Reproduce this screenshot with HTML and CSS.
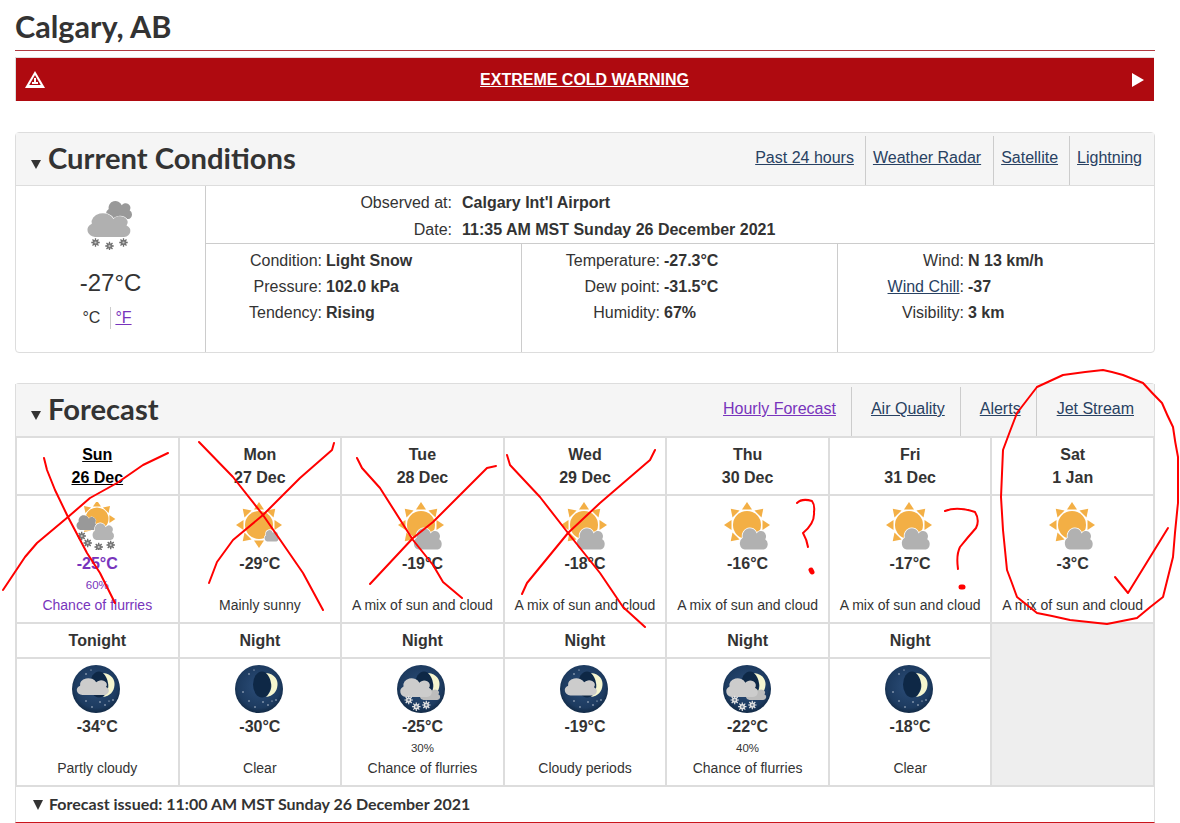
FILE: index.html
```html
<!DOCTYPE html>
<html lang="en">
<head>
<meta charset="utf-8">
<title>Calgary, AB</title>
<link rel="stylesheet" href="styles.css">
</head>
<body>
<svg class="sprite" aria-hidden="true">
  <defs>
    <radialGradient id="night-sky" cx="50%" cy="45%" r="55%">
      <stop offset="0" stop-color="#2b4d78"/>
      <stop offset="0.8" stop-color="#1d3b60"/>
      <stop offset="1" stop-color="#122a46"/>
    </radialGradient>
    <path id="cloud-shape" d="M6 20A6 6 0 0 1 4 9 7.3 7.3 0 0 1 18 5 5 5 0 0 1 26.5 10.5 5.2 5.2 0 0 1 25 20Z"/>
    <g id="rays">
      <path id="ray" d="M24 0l5 7.5h-10z" fill="#f3af45"/>
      <use href="#ray" transform="rotate(45 24 23)"/>
      <use href="#ray" transform="rotate(90 24 23)"/>
      <use href="#ray" transform="rotate(135 24 23)"/>
      <use href="#ray" transform="rotate(180 24 23)"/>
      <use href="#ray" transform="rotate(225 24 23)"/>
      <use href="#ray" transform="rotate(270 24 23)"/>
      <use href="#ray" transform="rotate(315 24 23)"/>
    </g>
    <g id="flake">
      <path d="M-4.2 0H4.2M0-4.2V4.2M-3-3 3 3M-3 3 3-3" stroke="#6a6a6a" stroke-width="1.3"/>
      <circle r="2.8" fill="#777"/>
      <circle r="1.1" fill="#c8c8c8"/>
    </g>
    <g id="night-flake">
      <path d="M-4.2 0H4.2M0-4.2V4.2M-3-3 3 3M-3 3 3-3" stroke="#e4e4e4" stroke-width="1.2"/>
      <circle r="2.6" fill="#e4e4e4"/>
      <circle r="1.2" fill="#6f7f92"/>
    </g>
    <g id="stars" fill="#dfe6ef">
      <circle cx="8" cy="27" r=".7"/><circle cx="14" cy="36" r=".7"/><circle cx="20" cy="42" r=".7"/>
      <circle cx="28" cy="37" r=".7"/><circle cx="33" cy="40" r=".7"/><circle cx="41" cy="35" r=".7"/>
      <circle cx="37" cy="36" r=".6"/><circle cx="14" cy="9" r=".7"/><circle cx="19" cy="5" r=".6"/>
    </g>
    <path id="crescent" fill="#f6f6cf" d="M31 8C40 9 43 15 42.5 20 42 27 38 31 31 32 36 27 37 22 36 18 35.5 14 34 11 31 8Z"/>

    <symbol id="sun-cloud" viewBox="0 0 48 48">
      <use href="#rays"/>
      <circle cx="24" cy="23" r="14" fill="#f3af45"/>
      <use href="#cloud-shape" transform="translate(15.7 26) scale(1 1.08)" fill="#b1b1b1" stroke="#fff" stroke-width="1.5" paint-order="stroke"/>
    </symbol>
    <symbol id="mostly-sun" viewBox="0 0 48 48">
      <use href="#rays"/>
      <circle cx="24" cy="23" r="14" fill="#f3af45"/>
      <use href="#cloud-shape" transform="translate(29 28) scale(.5 .58)" fill="#b1b1b1" stroke="#fff" stroke-width="2.5" paint-order="stroke"/>
    </symbol>
    <symbol id="sun-flurries" viewBox="0 0 48 48">
      <use href="#rays" transform="translate(5.8 -1.4) scale(.8)"/>
      <circle cx="25" cy="17" r="11.5" fill="#f3af45"/>
      <use href="#cloud-shape" transform="translate(3.7 13) scale(.73 .75)" fill="#999" stroke="#fff" stroke-width="1.2" paint-order="stroke"/>
      <use href="#cloud-shape" transform="translate(19.7 21) scale(.77 .85)" fill="#b4b4b4" stroke="#fff" stroke-width="1.4" paint-order="stroke"/>
      <use href="#flake" x="9.7" y="34"/><use href="#flake" x="15.7" y="41"/><use href="#flake" x="26.7" y="45"/><use href="#flake" x="38.7" y="43"/>
    </symbol>
    <symbol id="cloud-snow" viewBox="0 0 48 50">
      <use href="#cloud-shape" transform="translate(20 .7) scale(.93 .92)" fill="#999"/>
      <use href="#cloud-shape" transform="translate(.7 13) scale(1.54 1.2)" fill="#b0b0b0" stroke="#fff" stroke-width=".8" paint-order="stroke"/>
      <use href="#flake" x="10.5" y="42.5"/><use href="#flake" x="24.5" y="46"/><use href="#flake" x="38.5" y="42.5"/>
    </symbol>
    <symbol id="moon-clear" viewBox="0 0 48 48">
      <circle cx="24" cy="24" r="24" fill="url(#night-sky)"/>
      <use href="#stars"/>
      <ellipse cx="27" cy="19.5" rx="9" ry="13" fill="#0e2846"/>
      <use href="#crescent"/>
    </symbol>
    <symbol id="moon-partly" viewBox="0 0 48 48">
      <circle cx="24" cy="24" r="24" fill="url(#night-sky)"/>
      <use href="#stars"/>
      <ellipse cx="27" cy="19.5" rx="9" ry="13" fill="#0e2846"/>
      <use href="#crescent"/>
      <use href="#cloud-shape" transform="translate(3.5 13) scale(1.15 .85)" fill="#ccc"/>
    </symbol>
    <symbol id="moon-periods" viewBox="0 0 48 48">
      <circle cx="24" cy="24" r="24" fill="url(#night-sky)"/>
      <use href="#stars"/>
      <ellipse cx="27" cy="19.5" rx="9" ry="13" fill="#0e2846"/>
      <use href="#crescent"/>
      <use href="#cloud-shape" transform="translate(3.5 13) scale(1.15 .87)" fill="#ccc"/>
    </symbol>
    <symbol id="moon-snow" viewBox="0 0 48 48">
      <circle cx="24" cy="24" r="24" fill="url(#night-sky)"/>
      <ellipse cx="27" cy="19.5" rx="9" ry="13" fill="#0e2846"/>
      <use href="#crescent"/>
      <use href="#cloud-shape" transform="translate(22 23) scale(.73 .6)" fill="#bcbcbc"/>
      <use href="#cloud-shape" transform="translate(2 13) scale(1.13 .95)" fill="#ccc"/>
      <use href="#night-flake" x="11.7" y="35"/><use href="#night-flake" x="19.3" y="41.7"/><use href="#night-flake" x="29.3" y="40"/>
    </symbol>
  </defs>
</svg>

<main class="page">
  <h1 class="city">Calgary, AB</h1>

  <div class="alert">
    <svg class="alert-icon" viewBox="0 0 20 17" aria-hidden="true">
      <path d="M10 0 20 17H0Z" fill="#fff"/>
      <path d="M10 4 15.8 14H4.2Z" fill="#af0a10"/>
      <path d="M9 7h2v4H9zM7 11h6v2H7z" fill="#fff"/>
    </svg>
    <a class="alert-link" href="#">EXTREME COLD WARNING</a>
    <span class="alert-arrow"></span>
  </div>

  <section class="panel panel-current">
    <header class="panel-head">
      <h2 class="panel-title"><span class="caret"></span>Current Conditions</h2>
      <nav class="tabs tabs-current">
        <a href="#">Past 24 hours</a>
        <a href="#">Weather Radar</a>
        <a href="#">Satellite</a>
        <a href="#">Lightning</a>
      </nav>
    </header>
    <div class="current-body">
      <div class="now">
        <svg class="now-icon" aria-hidden="true"><use href="#cloud-snow"/></svg>
        <div class="now-temp">-27°C</div>
        <div class="units"><span class="unit-c">°C</span><a class="visited" href="#">°F</a></div>
      </div>
      <div class="details">
        <dl class="observed">
          <dt>Observed at:</dt><dd>Calgary Int'l Airport</dd>
          <dt>Date:</dt><dd>11:35 AM MST Sunday 26 December 2021</dd>
        </dl>
        <div class="readings">
          <dl class="reading reading-a">
            <dt>Condition:</dt><dd>Light Snow</dd>
            <dt>Pressure:</dt><dd>102.0 kPa</dd>
            <dt>Tendency:</dt><dd>Rising</dd>
          </dl>
          <dl class="reading reading-b">
            <dt>Temperature:</dt><dd>-27.3°C</dd>
            <dt>Dew point:</dt><dd>-31.5°C</dd>
            <dt>Humidity:</dt><dd>67%</dd>
          </dl>
          <dl class="reading reading-c">
            <dt>Wind:</dt><dd>N 13 km/h</dd>
            <dt><a href="#">Wind Chill</a>:</dt><dd>-37</dd>
            <dt>Visibility:</dt><dd>3 km</dd>
          </dl>
        </div>
      </div>
    </div>
  </section>

  <section class="panel panel-forecast">
    <header class="panel-head">
      <h2 class="panel-title"><span class="caret"></span>Forecast</h2>
      <nav class="tabs tabs-forecast">
        <a class="visited" href="#">Hourly Forecast</a>
        <a href="#">Air Quality</a>
        <a href="#">Alerts</a>
        <a href="#">Jet Stream</a>
      </nav>
    </header>
    <div class="grid">
      <div class="day day-today"><a href="#">Sun<br>26 Dec</a></div>
      <div class="day">Mon<br>27 Dec</div>
      <div class="day">Tue<br>28 Dec</div>
      <div class="day">Wed<br>29 Dec</div>
      <div class="day">Thu<br>30 Dec</div>
      <div class="day">Fri<br>31 Dec</div>
      <div class="day">Sat<br>1 Jan</div>

      <div class="fc fc-today"><svg class="icon"><use href="#sun-flurries"/></svg><div class="temp">-25°C</div><div class="pop">60%</div><div class="desc">Chance of flurries</div></div>
      <div class="fc"><svg class="icon"><use href="#mostly-sun"/></svg><div class="temp">-29°C</div><div class="pop"></div><div class="desc">Mainly sunny</div></div>
      <div class="fc"><svg class="icon"><use href="#sun-cloud"/></svg><div class="temp">-19°C</div><div class="pop"></div><div class="desc">A mix of sun and cloud</div></div>
      <div class="fc"><svg class="icon"><use href="#sun-cloud"/></svg><div class="temp">-18°C</div><div class="pop"></div><div class="desc">A mix of sun and cloud</div></div>
      <div class="fc"><svg class="icon"><use href="#sun-cloud"/></svg><div class="temp">-16°C</div><div class="pop"></div><div class="desc">A mix of sun and cloud</div></div>
      <div class="fc"><svg class="icon"><use href="#sun-cloud"/></svg><div class="temp">-17°C</div><div class="pop"></div><div class="desc">A mix of sun and cloud</div></div>
      <div class="fc"><svg class="icon"><use href="#sun-cloud"/></svg><div class="temp">-3°C</div><div class="pop"></div><div class="desc">A mix of sun and cloud</div></div>

      <div class="night">Tonight</div>
      <div class="night">Night</div>
      <div class="night">Night</div>
      <div class="night">Night</div>
      <div class="night">Night</div>
      <div class="night">Night</div>
      <div class="empty"></div>

      <div class="fc"><svg class="icon"><use href="#moon-partly"/></svg><div class="temp">-34°C</div><div class="pop"></div><div class="desc">Partly cloudy</div></div>
      <div class="fc"><svg class="icon"><use href="#moon-clear"/></svg><div class="temp">-30°C</div><div class="pop"></div><div class="desc">Clear</div></div>
      <div class="fc"><svg class="icon"><use href="#moon-snow"/></svg><div class="temp">-25°C</div><div class="pop">30%</div><div class="desc">Chance of flurries</div></div>
      <div class="fc"><svg class="icon"><use href="#moon-periods"/></svg><div class="temp">-19°C</div><div class="pop"></div><div class="desc">Cloudy periods</div></div>
      <div class="fc"><svg class="icon"><use href="#moon-snow"/></svg><div class="temp">-22°C</div><div class="pop">40%</div><div class="desc">Chance of flurries</div></div>
      <div class="fc"><svg class="icon"><use href="#moon-clear"/></svg><div class="temp">-18°C</div><div class="pop"></div><div class="desc">Clear</div></div>
    </div>
    <div class="issued"><span class="issued-caret"></span>Forecast issued: 11:00 AM MST Sunday 26 December 2021</div>
  </section>
</main>

<svg class="scribbles" viewBox="0 0 1180 823" aria-hidden="true">
  <polyline points="44,458 47,470 55,490 68,517 87,553 100,573 115,603"/>
  <polyline points="168,453 143,465 117,483 90,498 68,517 37,543 25,557 3,590"/>
  <polyline points="199,442 233,477 263,515 303,573 323,610"/>
  <polyline points="334,443 332,450 300,478 263,515 233,540 217,562 209,583"/>
  <polyline points="357,458 362,468 380,488 413,540 433,565 443,582 462,598"/>
  <polyline points="496,466 487,468 467,488 433,522 413,538 370,584"/>
  <polyline points="507,455 510,465 540,497 568,533 600,573 623,607 645,627"/>
  <polyline points="655,450 650,460 600,503 568,533 527,583 522,594"/>
  <path d="M797 503Q802 498 812 501Q815 505 814 512Q815 523 803 533Q807 540 808 547"/>
  <path class="dot" d="M811 570l1 2"/>
  <path d="M945 511Q957 506 975 512Q980 520 976 528Q968 537 960 547Q956 555 958 569"/>
  <path class="dot" d="M961 587h2"/>
  <path d="M1037 387Q1050 381 1063 375Q1083 372 1103 370Q1113 372 1123 375Q1133 379 1143 383Q1152 393 1162 403Q1167 415 1173 427Q1175 442 1178 457Q1178 480 1178 503Q1175 530 1173 557Q1168 577 1163 597Q1150 607 1137 618Q1122 621 1107 624Q1088 622 1070 620Q1053 616 1037 613Q1027 605 1017 597Q1012 583 1007 570Q1005 550 1003 530Q1002 513 1001 497Q1002 473 1003 450Q1010 431 1017 413Q1027 400 1037 387"/>
  <polyline points="1115,577 1128,593 1168,528"/>
</svg>
</body>
</html>
```

FILE: styles.css
```css
* { box-sizing: border-box; }

html, body { margin: 0; padding: 0; }

body {
  position: relative;
  width: 1180px;
  height: 823px;
  overflow: hidden;
  background: #fff;
  color: #333;
  font-family: "Liberation Sans", Arial, sans-serif;
  font-size: 16px;
}

a { color: #284162; }
a.visited { color: #7834bc; }

.sprite { position: absolute; width: 0; height: 0; }

.page { width: 1140px; margin-left: 15px; }

.city {
  height: 51px;
  margin: 0;
  border-bottom: 1px solid #af3c43;
  font-family: Lato, sans-serif;
  font-size: 30.6px;
  font-weight: 700;
  line-height: 54px;
  color: #333;
}

.alert {
  display: grid;
  grid-template-columns: 1fr auto 1fr;
  align-items: center;
  width: 1139px;
  height: 44px;
  margin-top: 6px;
  padding: 0 10px 0 9px;
  background: #af0a10;
  border-left: 1px solid #ddd;
  border-top: 1px solid #ddd;
}

.alert-icon { width: 20px; height: 17px; }

.alert-link {
  text-align: center;
  color: #fff;
  font-weight: 700;
}

.alert-arrow {
  justify-self: end;
  border-left: 12px solid #fff;
  border-top: 7px solid transparent;
  border-bottom: 7px solid transparent;
}

.panel {
  border: 1px solid #ddd;
  border-radius: 4px;
}

.panel-current { height: 221px; margin-top: 31px; }
.panel-forecast { margin-top: 30px; border-width: 1px 0 0; }

.panel-head {
  display: flex;
  align-items: stretch;
  justify-content: space-between;
  height: 53px;
  background: #f5f5f5;
  border-bottom: 1px solid #ddd;
}

.panel-forecast .panel-head {
  height: 52px;
  border: solid #ddd;
  border-width: 0 1px;
}

.panel-title {
  margin: 0;
  padding-left: 15px;
  font-family: Lato, sans-serif;
  font-size: 29.2px;
  font-weight: 700;
  line-height: 49px;
  color: #333;
}

.caret {
  display: inline-block;
  margin-right: 7px;
  border-top: 9px solid #333;
  border-left: 5.5px solid transparent;
  border-right: 5.5px solid transparent;
}

.tabs { display: flex; padding-top: 3px; }
.tabs a { line-height: 44px; border-left: 1px solid #ccc; }
.tabs a:first-child { border-left: 0; }

.tabs-current a { padding: 0 11px 0 7px; }
.tabs-current a:nth-child(2) { padding-right: 12px; }
.tabs-current a:last-child { padding-right: 12px; }
.tabs-forecast a { padding: 0 15px 0 19px; }
.tabs-forecast a:last-child { padding: 0 20px 0 20px; }

.current-body { display: flex; height: 166px; }

.now {
  flex: none;
  width: 190px;
  border-right: 1px solid #ccc;
  text-align: center;
}

.now-icon { display: block; width: 48px; height: 50px; margin: 14px auto 0 69px; }
.now-temp { margin-top: 19px; font-size: 24px; line-height: 28px; }

.units {
  display: flex;
  justify-content: center;
  margin-top: 10px;
  padding-right: 7px;
  line-height: 22px;
}

.unit-c { padding-right: 10px; border-right: 1px solid #ccc; }
.units a { padding-left: 4px; }

.details { flex: 1; display: flex; flex-direction: column; }

dl { margin: 0; display: grid; line-height: 26px; }
dt { text-align: right; }
dd { margin: 0; font-weight: 700; }

.observed {
  height: 58px;
  padding-top: 4px;
  grid-template-columns: 246px 1fr;
  column-gap: 10px;
  border-bottom: 1px solid #ccc;
}

.readings { flex: 1; display: grid; grid-template-columns: 316px 316px 1fr; }

.reading { align-content: start; padding-top: 4px; column-gap: 4px; grid-template-columns: var(--label) 1fr; border-right: 1px solid #ccc; }
.reading:last-child { border-right: 0; }
.reading-a { --label: 116px; }
.reading-b { --label: 138px; }
.reading-c { --label: 126px; }

.grid {
  display: grid;
  grid-template-columns: repeat(7, 1fr);
  grid-template-rows: 56px 126px 33px 126px;
  gap: 2px;
  padding: 2px 0;
  border-left: 2px solid #ddd;
  border-right: 2px solid #ddd;
  background: #ddd;
}

.day, .fc, .night { background: #fff; text-align: center; }

.day { padding-top: 5px; font-weight: 700; line-height: 23px; }
.day-today a { color: #000; }

.night { font-weight: 700; line-height: 34px; }

.empty { grid-column: 7; grid-row: 3 / 5; background: #eee; }

.fc { display: flex; flex-direction: column; align-items: center; padding-top: 6px; }
.icon { display: block; width: 48px; height: 48px; flex: none; margin-right: 2px; }
.temp { margin-top: 3px; font-weight: 700; line-height: 22px; }
.pop { height: 21px; font-size: 11.5px; line-height: 21px; }
.desc { font-size: 14px; line-height: 18px; }

.fc-today { color: #7834bc; }

.issued {
  height: 36px;
  padding-left: 17px;
  background: #fff;
  border-left: 1px solid #ddd;
  border-right: 1px solid #ddd;
  border-bottom: 1px solid #c9151c;
  font-family: Lato, sans-serif;
  font-size: 16px;
  font-weight: 700;
  line-height: 34px;
}

.issued-caret {
  display: inline-block;
  margin-right: 6px;
  border-top: 10px solid #333;
  border-left: 5.5px solid transparent;
  border-right: 5.5px solid transparent;
}

.scribbles {
  position: absolute;
  top: 0;
  left: 0;
  width: 1180px;
  height: 823px;
  pointer-events: none;
  fill: none;
  stroke: #f00;
  stroke-width: 2;
  stroke-linecap: round;
  stroke-linejoin: round;
}

.scribbles .dot { stroke-width: 5; }
```
